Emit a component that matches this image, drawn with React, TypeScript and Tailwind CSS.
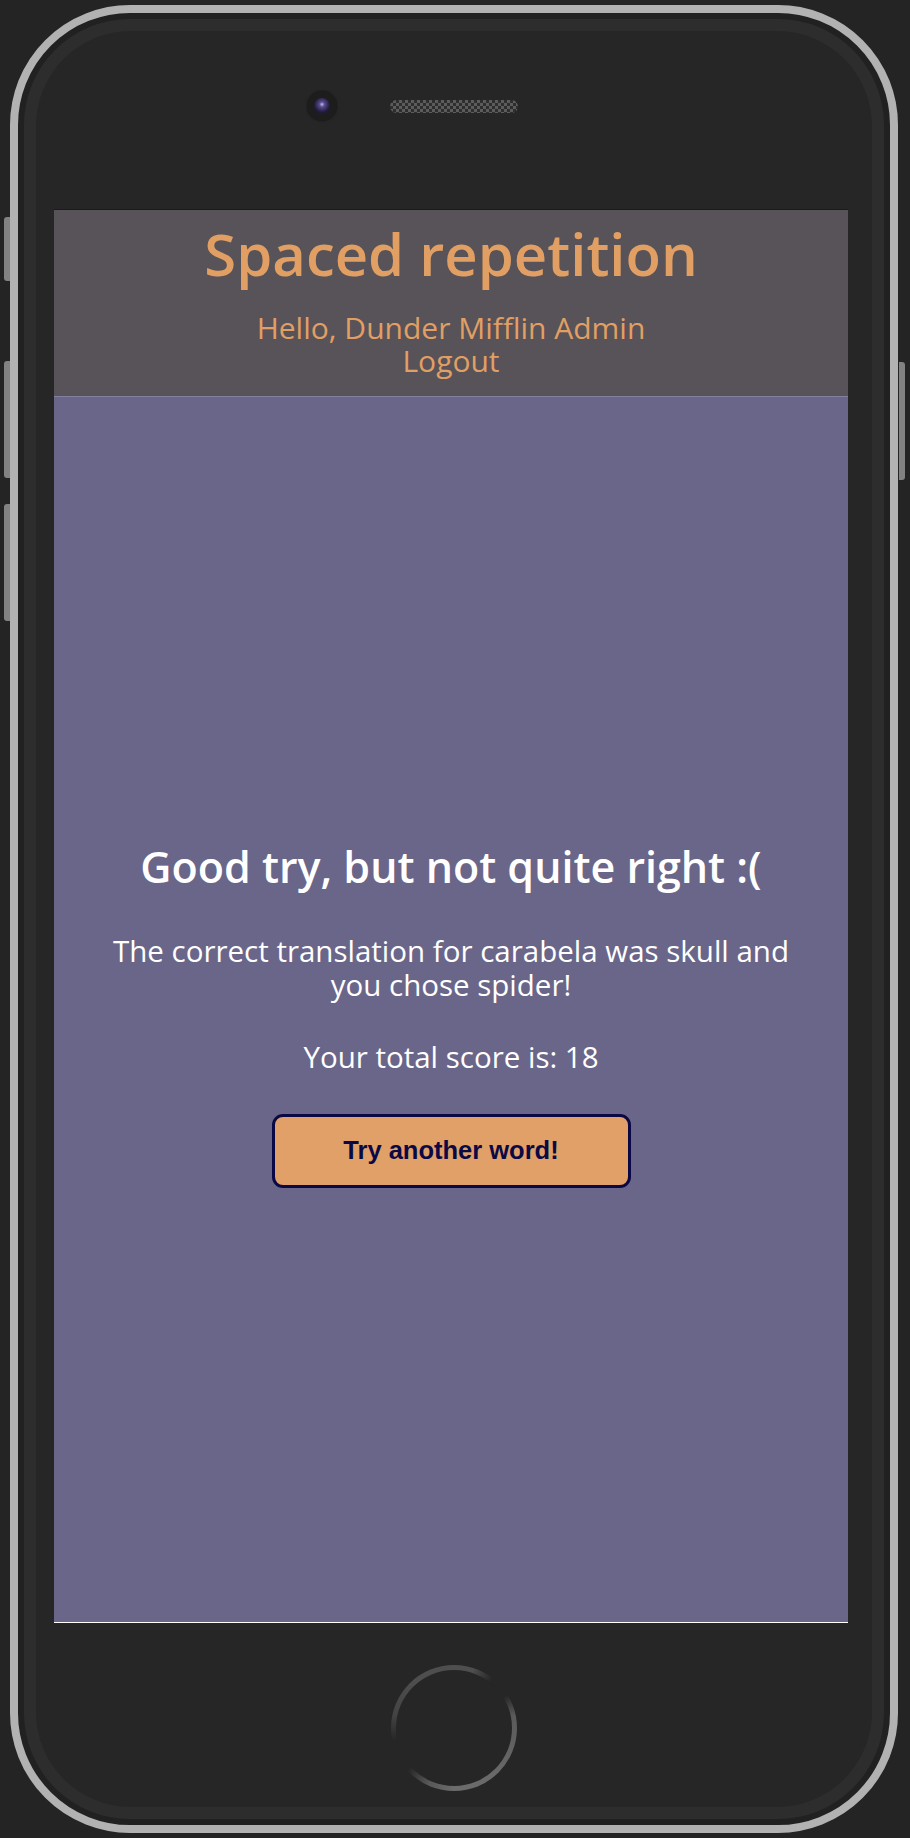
import React from "react";

const face = "font-['Open_Sans','Noto_Sans',sans-serif]";

function SideButton({ side, top, height }: { side: "left" | "right"; top: string; height: string }) {
    const pos = side === "left" ? "left-[-6px] rounded-l-[3px]" : "right-[-7px] rounded-r-[3px]";
    return <div className={`absolute w-[6px] bg-[#828282] ${pos} ${top} ${height}`} />;
}

function Camera() {
    return (
        <div className="w-[30px] h-[30px] rounded-full bg-[#1d1d1d] flex items-center justify-center shadow-[0_0_2px_#161616]">
            <div className="w-[16px] h-[16px] rounded-full bg-[radial-gradient(circle_at_50%_40%,#bdb6e0_0,#9a90c8_1px,#5a4e8e_2.5px,#3d3368_5px,#1f1a36_8px)]" />
        </div>
    );
}

function Speaker() {
    return (
        <div className="w-[128px] h-[13px] rounded-full bg-[conic-gradient(#5c5c5c_25%,#2e2e2e_0_50%,#5c5c5c_0_75%,#2e2e2e_0)] bg-size-[6px_6px]" />
    );
}

function HomeButton() {
    return (
        <div className="w-[126px] h-[126px] rounded-full p-[5px] bg-[conic-gradient(#4e4e4e_0deg,#4e4e4e_18deg,#262626_38deg,#262626_58deg,#5a5a5a_78deg,#696969_140deg,#6b6b6b_180deg,#575757_205deg,#262626_228deg,#262626_258deg,#434343_282deg,#4e4e4e_320deg,#4e4e4e_360deg)]">
            <div className="w-full h-full rounded-full bg-[#262626]" />
        </div>
    );
}

const Header: React.FC = () => (
    <header className={`h-[188px] bg-[#575358] border-t border-[#1a1a1a] border-b border-b-[#837f9f] flex flex-col items-center text-[#e19f64] ${face}`}>
        <h1 className="mt-[9px] text-[58px] leading-[70px] font-semibold">Spaced repetition</h1>
        <div className="mt-[22px] text-[30px] leading-[33px] text-center">
            <p>Hello, Dunder Mifflin Admin</p>
            <a className="cursor-pointer">Logout</a>
        </div>
    </header>
);

const Feedback: React.FC = () => (
    <main className={`flex-1 bg-[#6a668a] border-b border-white flex flex-col items-center justify-center pt-[10px] text-white ${face}`}>
        <h2 className="text-[43px] leading-[50px] font-semibold">Good try, but not quite right :(</h2>
        <p className="mt-[42px] w-[690px] text-center text-[29.5px] leading-[34px]">
            The correct translation for carabela was skull and you chose spider!
        </p>
        <p className="mt-[38px] text-[29.5px] leading-[34px]">Your total score is: 18</p>
        <button className="mt-[40px] w-[359px] h-[74px] rounded-[11px] border-[3px] border-[#0b0945] bg-[#e0a068] text-[#0b0945] text-[25.5px] font-bold font-['Liberation_Sans',Arial,sans-serif]">
            Try another word!
        </button>
    </main>
);

export default function App() {
    return (
        <div className="w-[910px] h-[1838px] bg-[#242424] pt-[5px] pl-[10px] overflow-hidden">
            <div className="relative w-[888px] h-[1828px]">
                <SideButton side="left" top="top-[212px]" height="h-[64px]" />
                <SideButton side="left" top="top-[356px]" height="h-[117px]" />
                <SideButton side="left" top="top-[499px]" height="h-[117px]" />
                <SideButton side="right" top="top-[357px]" height="h-[118px]" />
                <div className="w-full h-full rounded-[120px] border-[8px] border-[#b2b2b2] bg-[#212121] p-[6px]">
                    <div className="w-full h-full rounded-[106px] bg-[#2d2d2d] p-[12px]">
                        <div className="w-full h-full rounded-[95px] bg-[#262626] flex flex-col">
                            <div className="h-[178px] pt-[60px] flex justify-center items-start">
                                <div className="flex items-center gap-[53px]">
                                    <Camera />
                                    <Speaker />
                                    <div className="w-[30px]" />
                                </div>
                            </div>
                            <div className="pl-[18px] pr-[24px]">
                                <div className="w-[794px] h-[1414px] flex flex-col">
                                    <Header />
                                    <Feedback />
                                </div>
                            </div>
                            <div className="mt-[42px] flex justify-center">
                                <HomeButton />
                            </div>
                        </div>
                    </div>
                </div>
            </div>
        </div>
    );
}
